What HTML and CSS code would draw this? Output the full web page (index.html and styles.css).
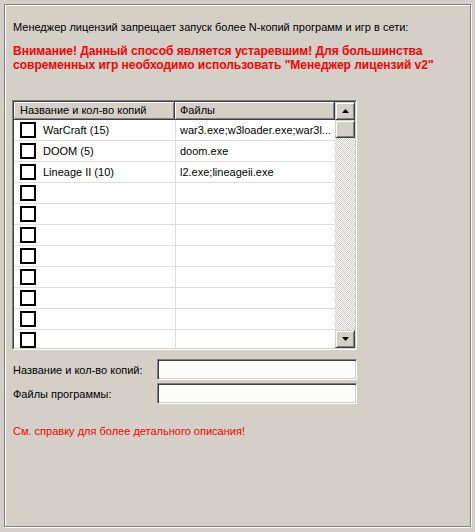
FILE: index.html
```html
<!DOCTYPE html>
<html lang="ru">
<head>
<meta charset="utf-8">
<link rel="stylesheet" href="styles.css">
</head>
<body>
<div class="frame">
  <p class="intro">Менеджер лицензий запрещает запуск более N-копий программ и игр в сети:</p>
  <p class="warn">Внимание! Данный способ является устаревшим! Для большинства<br>современных игр необходимо использовать "Менеджер лицензий v2"</p>

  <div class="listview">
    <div class="list">
      <div class="header">
        <div class="hcell">Название и кол-во копий</div>
        <div class="hcell">Файлы</div>
      </div>
      <div class="rows">
        <div class="row"><div class="cell"><span class="check"></span>WarCraft (15)</div><div class="cell">war3.exe;w3loader.exe;war3l...</div></div>
        <div class="row"><div class="cell"><span class="check"></span>DOOM (5)</div><div class="cell">doom.exe</div></div>
        <div class="row"><div class="cell"><span class="check"></span>Lineage II (10)</div><div class="cell">l2.exe;lineageii.exe</div></div>
        <div class="row"><div class="cell"><span class="check"></span></div><div class="cell"></div></div>
        <div class="row"><div class="cell"><span class="check"></span></div><div class="cell"></div></div>
        <div class="row"><div class="cell"><span class="check"></span></div><div class="cell"></div></div>
        <div class="row"><div class="cell"><span class="check"></span></div><div class="cell"></div></div>
        <div class="row"><div class="cell"><span class="check"></span></div><div class="cell"></div></div>
        <div class="row"><div class="cell"><span class="check"></span></div><div class="cell"></div></div>
        <div class="row"><div class="cell"><span class="check"></span></div><div class="cell"></div></div>
        <div class="row"><div class="cell"><span class="check"></span></div><div class="cell"></div></div>
      </div>
    </div>
    <div class="scrollbar">
      <div class="sbtn"><svg width="7" height="4" viewBox="0 0 7 4"><path d="M3.5 0 L7 4 L0 4 Z" fill="#000"/></svg></div>
      <div class="track"><div class="thumb"></div></div>
      <div class="sbtn"><svg width="7" height="4" viewBox="0 0 7 4"><path d="M0 0 L7 0 L3.5 4 Z" fill="#000"/></svg></div>
    </div>
  </div>

  <div class="form">
    <label class="flabel">Название и кол-во копий:</label>
    <div class="input"></div>
    <label class="flabel">Файлы программы:</label>
    <div class="input"></div>
  </div>

  <p class="note">См. справку для более детального описания!</p>
</div>
</body>
</html>
```

FILE: styles.css
```css
html, body {
  margin: 0;
  padding: 0;
  background: #d4d0c8;
}
body {
  width: 475px;
  height: 532px;
  font-family: "Liberation Sans", Arial, sans-serif;
  font-size: 11px;
  color: #000;
  overflow: hidden;
}
.frame {
  box-sizing: border-box;
  margin: 4px 0 0 4px;
  width: 467px;
  height: 523px;
  border: 1px solid #808080;
  box-shadow: inset 1px 1px #fff, 1px 1px #fff;
  padding: 16px 7px 0 7px;
}
.intro {
  margin: 0 1px;
  line-height: 13px;
}
.warn {
  margin: 10px 1px 0;
  color: #ff0000;
  font-weight: bold;
  font-size: 12px;
  line-height: 14px;
}
.listview {
  margin-top: 28px;
  width: 345px;
  height: 250px;
  box-sizing: border-box;
  border: 1px solid;
  border-color: #808080 #fff #fff #808080;
  padding: 1px;
  display: flex;
  background: #fff;
  position: relative;
}
.listview::before {
  content: "";
  position: absolute;
  inset: 0;
  border: 1px solid;
  border-color: #404040 #d4d0c8 #d4d0c8 #404040;
  pointer-events: none;
}
.list {
  flex: 1;
  overflow: hidden;
  background: #fff;
}
.header {
  display: grid;
  grid-template-columns: 161px 160px;
  height: 18px;
}
.hcell {
  box-sizing: border-box;
  background: #d4d0c8;
  border-right: 1px solid #404040;
  border-bottom: 1px solid #404040;
  box-shadow: inset 1px 1px #fff, inset -1px -1px #808080;
  padding: 0 0 0 6px;
  line-height: 17px;
  white-space: nowrap;
  overflow: hidden;
}
.hcell + .hcell {
  padding-left: 5px;
}
.rows {
  display: flex;
  flex-direction: column;
}
.row {
  display: grid;
  grid-template-columns: 161px 160px;
  height: 21px;
  flex: none;
  box-sizing: border-box;
  border-bottom: 1px solid #dedede;
}
.cell {
  display: flex;
  align-items: center;
  white-space: nowrap;
  overflow: hidden;
  padding-left: 5px;
}
.cell + .cell {
  border-left: 1px solid #dedede;
  padding-left: 4px;
}
.check {
  box-sizing: border-box;
  width: 16px;
  height: 16px;
  border: 2px solid #000;
  background: #fff;
  margin: 0 7px 0 1px;
  flex: none;
}
.scrollbar {
  width: 20px;
  display: flex;
  flex-direction: column;
  flex: none;
}
.sbtn, .thumb {
  box-sizing: border-box;
  background: #d4d0c8;
  border: 1px solid;
  border-color: #d4d0c8 #404040 #404040 #d4d0c8;
  box-shadow: inset 1px 1px #fff, inset -1px -1px #808080;
}
.sbtn {
  height: 18px;
  display: flex;
  align-items: center;
  justify-content: center;
  flex: none;
}
.track {
  flex: 1;
  background-color: #fff;
  background-image: conic-gradient(#d4d0c8 25%, #fff 0 50%, #d4d0c8 0 75%, #fff 0);
  background-size: 2px 2px;
}
.thumb {
  height: 18px;
}
.form {
  display: grid;
  grid-template-columns: 145px 200px;
  row-gap: 3px;
  margin-top: 9px;
  align-items: center;
}
.flabel {
  padding-left: 1px;
  white-space: nowrap;
}
.input {
  box-sizing: border-box;
  height: 21px;
  background: #fcfdfb;
  border: 1px solid;
  border-color: #808080 #fff #fff #808080;
  box-shadow: inset 1px 1px #404040, inset -1px -1px #d4d0c8;
}
.note {
  margin: 21px 1px 0;
  color: #ff0000;
  line-height: 13px;
}
```
